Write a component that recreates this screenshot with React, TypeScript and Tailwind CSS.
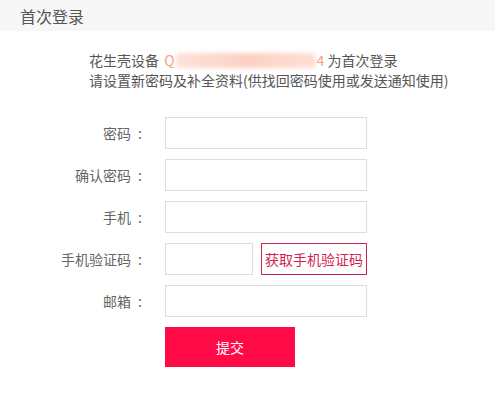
const font = { fontFamily: '"Microsoft YaHei", "Noto Sans CJK SC", sans-serif' }

function Row({ label, children }: { label: string; children: React.ReactNode }) {
  return (
    <div className="flex h-[32px] items-center">
      <label className="w-[142px] text-right text-[14px] text-[#666]">
        {label}
        <span className="ml-[7px]">:</span>
      </label>
      <div className="ml-[23px] flex">{children}</div>
    </div>
  )
}

export default function App() {
  const input = "h-[32px] border border-[#ddd] bg-white outline-none"
  return (
    <div className="h-[399px] w-[495px] bg-white" style={font}>
      <div className="flex h-[31px] items-center bg-[#f7f7f7] pl-[20px] text-[16px] text-[#555]">首次登录</div>

      <div className="pl-[89px] pt-[19px] text-[14px] leading-[20px] text-[#555]">
        <p className="flex items-center">
          花生壳设备&nbsp;<span className="ml-[2px] text-[#f5a27e]">Q</span>
          <span className="mx-[1px] h-[15px] w-[140px] rounded-sm bg-gradient-to-r from-[#fde3da] via-[#fbd0c2] to-[#fde0d5] blur-[2px]" />
          <span className="text-[#f5a27e]">4</span>&nbsp;为首次登录
        </p>
        <p>请设置新密码及补全资料(供找回密码使用或发送通知使用)</p>
      </div>

      <form className="mt-[27px] flex flex-col gap-[10px]">
        <Row label="密码">
          <input type="password" className={`${input} w-[202px]`} />
        </Row>
        <Row label="确认密码">
          <input type="password" className={`${input} w-[202px]`} />
        </Row>
        <Row label="手机">
          <input className={`${input} w-[202px]`} />
        </Row>
        <Row label="手机验证码">
          <input className={`${input} w-[88px]`} />
          <button
            type="button"
            className="ml-[8px] h-[32px] w-[106px] border border-[#c8254f] text-[14px] text-[#d21f50]"
          >
            获取手机验证码
          </button>
        </Row>
        <Row label="邮箱">
          <input className={`${input} w-[202px]`} />
        </Row>
        <div className="pl-[165px]">
          <button type="button" className="h-[40px] w-[130px] bg-[#ff0a47] text-[14px] text-white">
            提交
          </button>
        </div>
      </form>
    </div>
  )
}
